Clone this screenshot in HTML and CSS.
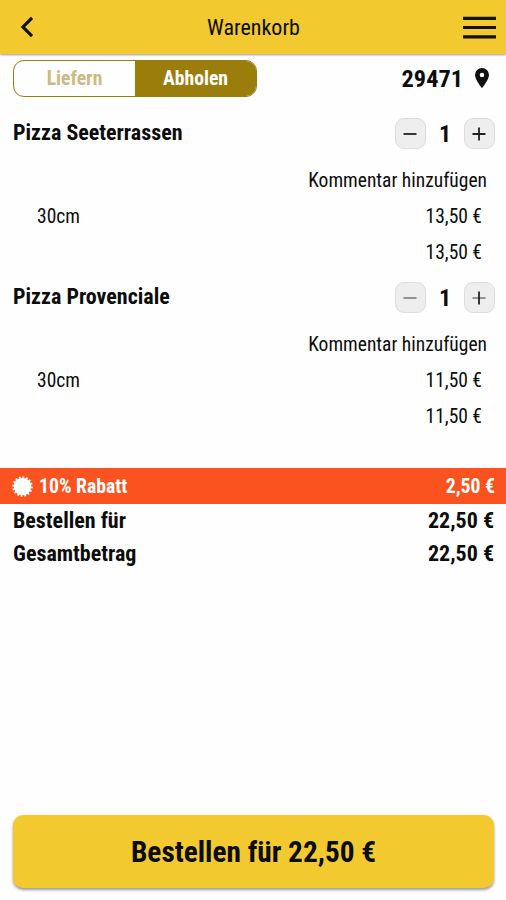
FILE: index.html
```html
<!DOCTYPE html>
<html lang="de">
<head>
<meta charset="utf-8">
<title>Warenkorb</title>
<link rel="stylesheet" href="styles.css">
</head>
<body>
<header class="topbar">
  <svg class="back" viewBox="0 0 14 22"><path d="M12 1.8 3 11l9 9.2"/></svg>
  <h1 class="title"><span>Warenkorb</span></h1>
  <svg class="menu" viewBox="0 0 33 24"><path d="M0 3.300h33M0 12.500h33M0 21.800h33"/></svg>
</header>
<main class="cart">
  <div class="mode-row">
    <div class="switch">
      <div class="option"><span>Liefern</span></div>
      <div class="option active"><span>Abholen</span></div>
    </div>
    <div class="location">
      <span class="zip">29471</span>
      <svg class="pin" viewBox="0 0 14 20"><path fill-rule="evenodd" d="M7 0a7 7 0 0 0-7 7c0 4.8 7 13 7 13s7-8.200 7-13a7 7 0 0 0-7-7Zm0 4.700a2.300 2.300 0 1 1 0 4.600a2.300 2.300 0 0 1 0-4.600Z"/></svg>
    </div>
  </div>
  <section class="item">
    <div class="item-head">
      <span class="name">Pizza Seeterrassen</span>
      <div class="stepper">
        <button class="step"><svg viewBox="0 0 14 14"><path d="M.5 7h13"/></svg></button>
        <span class="count">1</span>
        <button class="step"><svg viewBox="0 0 14 14"><path d="M.5 7h13M7 .5v13"/></svg></button>
      </div>
    </div>
    <div class="comment"><span>Kommentar hinzufügen</span></div>
    <div class="line"><span class="size">30cm</span><span class="price">13,50 €</span></div>
    <div class="line"><span></span><span class="price">13,50 €</span></div>
  </section>
  <section class="item">
    <div class="item-head">
      <span class="name">Pizza Provenciale</span>
      <div class="stepper">
        <button class="step soft"><svg viewBox="0 0 14 14"><path d="M.5 7h13"/></svg></button>
        <span class="count">1</span>
        <button class="step"><svg viewBox="0 0 14 14"><path class="faint" d="M.5 7h13"/><path d="M7 .5v13"/></svg></button>
      </div>
    </div>
    <div class="comment"><span>Kommentar hinzufügen</span></div>
    <div class="line"><span class="size">30cm</span><span class="price">11,50 €</span></div>
    <div class="line"><span></span><span class="price">11,50 €</span></div>
  </section>
  <div class="discount">
    <svg class="burst" viewBox="-10 -10 20 20"><circle r="8.400"/><circle class="teeth" r="8.500" pathLength="32"/></svg>
    <span class="discount-label">10% Rabatt</span>
    <span class="discount-value">2,50 €</span>
  </div>
  <div class="total"><span>Bestellen für</span><span>22,50 €</span></div>
  <div class="total"><span>Gesamtbetrag</span><span>22,50 €</span></div>
</main>
<footer class="footer"><button class="order"><span>Bestellen für 22,50 €</span></button></footer>
</body>
</html>
```
FILE: styles.css
```css
* { box-sizing: border-box; }
body {
  margin: 0;
  height: 900px;
  display: flex;
  flex-direction: column;
  background: #fefefe;
  color: #0c0c0c;
  font-family: "Roboto Condensed", Roboto, sans-serif;
  font-stretch: 75%;
  overflow: hidden;
}
button { font: inherit; color: inherit; border: 0; padding: 0; }
svg { display: block; flex: none; }
.topbar {
  height: 54px;
  display: flex;
  align-items: center;
  padding: 0 10px 0 20px;
  background: #f2ca30;
  box-shadow: 0 1px 2px rgba(0, 0, 0, .4);
}
.back { width: 14px; height: 22px; fill: none; stroke: #111; stroke-width: 3.2; }
.title { flex: 1; margin: 0 0 0 10px; text-align: center; font-size: 22px; font-weight: 400; }
.menu { width: 33px; height: 24px; fill: none; stroke: #111; stroke-width: 3.2; }
.mode-row { height: 50px; display: flex; justify-content: space-between; padding: 6px 17px 0 13px; }
.switch {
  width: 244px;
  height: 37px;
  display: flex;
  border: 1px solid #9b7d0c;
  border-radius: 11px;
  overflow: hidden;
  font-size: 19.700px;
  font-weight: 700;
  line-height: 36px;
  text-align: center;
}
.option { flex: 1; color: #ccb983; }
.option.active { background: #9b7d0c; color: #fff; }
.location { height: 36px; display: flex; align-items: center; gap: 12px; font-size: 24.300px; font-weight: 700; }
.zip { padding-top: 1px; }
.pin { width: 14px; height: 20px; fill: #111; }
.item { height: 164px; }
.item-head { height: 58px; display: flex; justify-content: space-between; padding: 14px 11px 0 13px; }
.name { font-size: 22px; line-height: 29px; font-weight: 700; }
.stepper { height: 31px; display: flex; align-items: center; }
.step {
  width: 31px;
  height: 31px;
  display: grid;
  place-items: center;
  background: #eee;
  border: 1px solid #ddd;
  border-radius: 9px;
}
.step svg { width: 14px; height: 14px; margin-right: 1px; stroke: #222; stroke-width: 1.800; }
.step.soft svg, .step svg .faint { stroke: #888; }
.count { width: 38px; text-align: center; font-size: 24px; font-weight: 700; }
.comment { height: 36px; padding-right: 19px; text-align: right; font-size: 19.500px; line-height: 37px; }
.line { height: 36px; display: flex; justify-content: space-between; padding: 0 24px 0 37px; font-size: 19.500px; line-height: 38px; }
.discount {
  height: 36px;
  display: flex;
  align-items: center;
  margin-top: 36px;
  padding: 0 11px 0 12px;
  background: #fb531f;
  color: #fff;
  font-size: 19.700px;
  font-weight: 700;
}
.burst { width: 21px; height: 21px; fill: #fff; }
.teeth { fill: none; stroke: #fff; stroke-width: 2.500; stroke-dasharray: 1 1; }
.discount-label { flex: 1; margin-left: 6px; }
.total { height: 33px; display: flex; justify-content: space-between; padding: 0 12px 0 13px; font-size: 22px; line-height: 33px; font-weight: 700; }
.footer { margin-top: auto; padding: 0 12px 12px 13px; }
.order {
  width: 100%;
  height: 73px;
  display: block;
  background: #f2ca30;
  border-radius: 10px;
  box-shadow: 0 2px 3px rgba(0, 0, 0, .4);
  font-size: 29.300px;
  font-weight: 700;
}
```
